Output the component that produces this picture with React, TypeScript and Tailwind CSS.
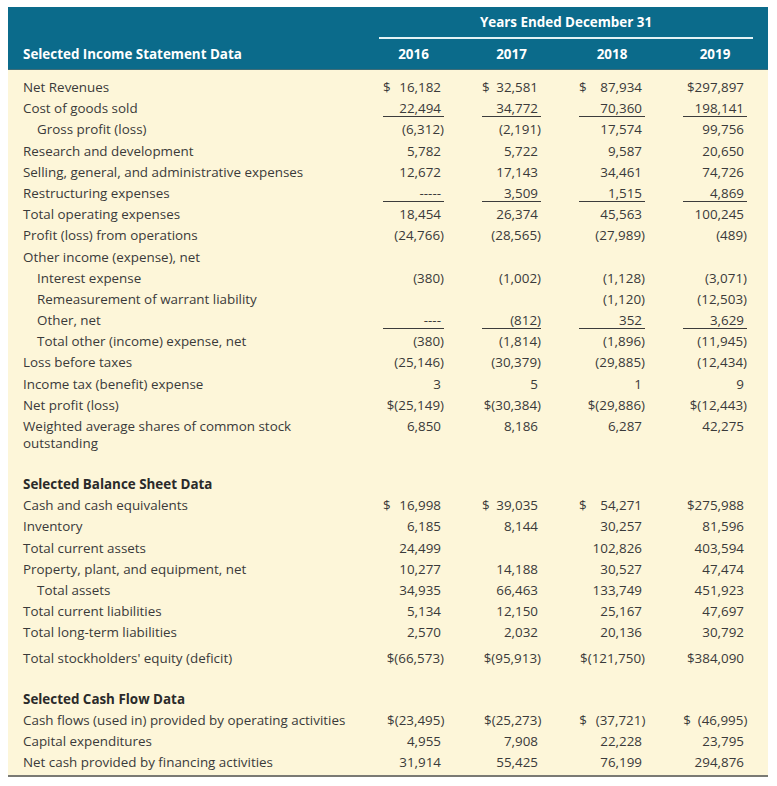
import React from "react";

type Row = {
  label: string;
  vals?: string[];
  indent?: boolean;
  under?: boolean;
  kind?: "title" | "wrap";
  cls?: string;
};

const income: Row[] = [
  { label: "Net Revenues", vals: ["$ 16,182", "$ 32,581", "$ 87,934", "$297,897"] },
  { label: "Cost of goods sold", vals: ["22,494", "34,772", "70,360", "198,141"], under: true },
  { label: "Gross profit (loss)", vals: ["(6,312)", "(2,191)", "17,574", "99,756"], indent: true },
  { label: "Research and development", vals: ["5,782", "5,722", "9,587", "20,650"] },
  { label: "Selling, general, and administrative expenses", vals: ["12,672", "17,143", "34,461", "74,726"] },
  { label: "Restructuring expenses", vals: ["-----", "3,509", "1,515", "4,869"], under: true },
  { label: "Total operating expenses", vals: ["18,454", "26,374", "45,563", "100,245"] },
  { label: "Profit (loss) from operations", vals: ["(24,766)", "(28,565)", "(27,989)", "(489)"] },
  { label: "Other income (expense), net" },
  { label: "Interest expense", vals: ["(380)", "(1,002)", "(1,128)", "(3,071)"], indent: true },
  { label: "Remeasurement of warrant liability", vals: ["", "", "(1,120)", "(12,503)"], indent: true },
  { label: "Other, net", vals: ["----", "(812)", "352", "3,629"], indent: true, under: true },
  { label: "Total other (income) expense, net", vals: ["(380)", "(1,814)", "(1,896)", "(11,945)"], indent: true },
  { label: "Loss before taxes", vals: ["(25,146)", "(30,379)", "(29,885)", "(12,434)"] },
  { label: "Income tax (benefit) expense", vals: ["3", "5", "1", "9"] },
  { label: "Net profit (loss)", vals: ["$(25,149)", "$(30,384)", "$(29,886)", "$(12,443)"] },
  { label: "Weighted average shares of common stock outstanding", vals: ["6,850", "8,186", "6,287", "42,275"], kind: "wrap" },
];

const balance: Row[] = [
  { label: "Selected Balance Sheet Data", kind: "title" },
  { label: "Cash and cash equivalents", vals: ["$ 16,998", "$ 39,035", "$ 54,271", "$275,988"] },
  { label: "Inventory", vals: ["6,185", "8,144", "30,257", "81,596"] },
  { label: "Total current assets", vals: ["24,499", "", "102,826", "403,594"] },
  { label: "Property, plant, and equipment, net", vals: ["10,277", "14,188", "30,527", "47,474"] },
  { label: "Total assets", vals: ["34,935", "66,463", "133,749", "451,923"], indent: true },
  { label: "Total current liabilities", vals: ["5,134", "12,150", "25,167", "47,697"] },
  { label: "Total long-term liabilities", vals: ["2,570", "2,032", "20,136", "30,792"] },
  { label: "Total stockholders' equity (deficit)", vals: ["$(66,573)", "$(95,913)", "$(121,750)", "$384,090"], cls: "mt-[4px]" },
];

const cash: Row[] = [
  { label: "Selected Cash Flow Data", kind: "title" },
  { label: "Cash flows (used in) provided by operating activities", vals: ["$(23,495)", "$(25,273)", "$ (37,721)", "$ (46,995)"] },
  { label: "Capital expenditures", vals: ["4,955", "7,908", "22,228", "23,795"] },
  { label: "Net cash provided by financing activities", vals: ["31,914", "55,425", "76,199", "294,876"] },
];

const grid = "grid grid-cols-[1fr_61px_59px_66px_64px] gap-x-[38px] pl-[15px] pr-[21px]";

const Value = ({ v }: { v: string }) => {
  const paren = v.endsWith(")");
  const pad = paren || v === "" ? "" : "pr-[3px]";
  if (v.startsWith("$ ")) {
    return (
      <div className={`flex justify-between ${pad}`}>
        <span>$</span>
        <span>{v.slice(2).trim()}</span>
      </div>
    );
  }
  return <div className={`text-right whitespace-nowrap ${pad}`}>{v}</div>;
};

const Line = ({ r }: { r: Row }) => {
  if (r.kind === "title") {
    return (
      <div className={`${grid} h-[21.2px] leading-[21.2px] font-bold text-[#2a2a2a]`}>
        <div>{r.label}</div>
      </div>
    );
  }
  if (r.kind === "wrap") {
    return (
      <div className={`${grid} pt-[2px] leading-[17px]`}>
        <div className="pr-[40px]">{r.label}</div>
        {r.vals?.map((v, i) => (
          <div key={i} className="self-start">
            <Value v={v} />
          </div>
        ))}
      </div>
    );
  }
  return (
    <div className={`${grid} h-[21.2px] leading-[21.2px] ${r.cls ?? ""}`}>
      <div className={`whitespace-nowrap ${r.indent ? "pl-[14px]" : ""}`}>{r.label}</div>
      {(r.vals ?? ["", "", "", ""]).map((v, i) => (
        <div
          key={i}
          className={r.under ? "h-[18.6px] border-b border-[#3c3c3c]" : ""}
        >
          <Value v={v} />
        </div>
      ))}
    </div>
  );
};

export default function App() {
  return (
    <div className="min-h-[786px] bg-white pt-[7px] pl-[8px] pr-[9px] font-['Open_Sans','Liberation_Sans',sans-serif] text-[13.4px] text-[#3a3a3a]">
      {/* header */}
      <div className="bg-[#0b6b8b] text-white font-bold border-b border-[#3f6d78]">
        <div className={`${grid} h-[32px] pt-[1px]`}>
          <div />
          <div className="col-span-4 -ml-[4px] -mr-[6px] border-b-2 border-[#e3f2f5] text-center leading-[29px]">
            Years Ended December 31
          </div>
        </div>
        <div className={`${grid} h-[30px] leading-[31px]`}>
          <div>Selected Income Statement Data</div>
          <div className="text-center">2016</div>
          <div className="text-center">2017</div>
          <div className="text-center">2018</div>
          <div className="text-center">2019</div>
        </div>
      </div>

      {/* body */}
      <div className="bg-[#fdf6d9] pt-[7px] pb-[2px] border-b-2 border-[#7a7a74]">
        {income.map((r) => (
          <Line key={r.label} r={r} />
        ))}
        <div className="h-[22px]" />
        {balance.map((r) => (
          <Line key={r.label} r={r} />
        ))}
        <div className="h-[20px]" />
        {cash.map((r) => (
          <Line key={r.label} r={r} />
        ))}
      </div>
    </div>
  );
}
